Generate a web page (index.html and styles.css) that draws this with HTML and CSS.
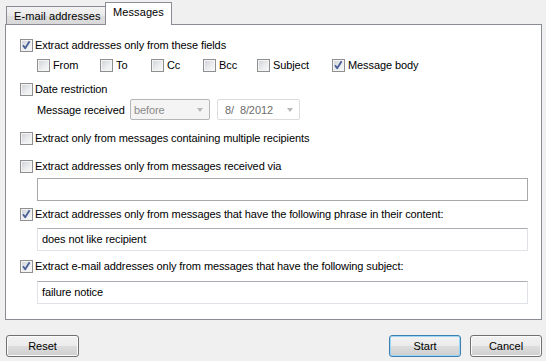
FILE: index.html
```html
<!DOCTYPE html>
<html>
<head>
<meta charset="utf-8">
<link rel="stylesheet" href="styles.css">
</head>
<body>
<div class="dialog">
  <div class="tabs">
    <div class="tab">E-mail addresses</div>
    <div class="tab active">Messages</div>
  </div>
  <div class="panel">
    <div class="row r1"><span class="cb checked"><svg width="11" height="11" viewBox="0 0 11 11"><path d="M2 5.2 L4.2 8.3 L8.6 1.3" fill="none" stroke="#4a5f97" stroke-width="1.8" stroke-linejoin="round"/></svg></span>Extract addresses only from these fields</div>
    <div class="fields">
      <div class="row"><span class="cb"></span>From</div>
      <div class="row"><span class="cb"></span>To</div>
      <div class="row"><span class="cb"></span>Cc</div>
      <div class="row"><span class="cb"></span>Bcc</div>
      <div class="row"><span class="cb"></span>Subject</div>
      <div class="row"><span class="cb checked"><svg width="11" height="11" viewBox="0 0 11 11"><path d="M2 5.2 L4.2 8.3 L8.6 1.3" fill="none" stroke="#4a5f97" stroke-width="1.8" stroke-linejoin="round"/></svg></span>Message body</div>
    </div>
    <div class="row r3"><span class="cb"></span>Date restriction</div>
    <div class="daterow">
      <span class="dlabel">Message received</span>
      <span class="select">before<span class="arrow"></span></span>
      <span class="date">8/&nbsp; 8/2012<span class="arrow"></span></span>
    </div>
    <div class="row r5"><span class="cb"></span>Extract only from messages containing multiple recipients</div>
    <div class="row r6"><span class="cb"></span>Extract addresses only from messages received via</div>
    <div class="input in1"></div>
    <div class="row r7"><span class="cb checked"><svg width="11" height="11" viewBox="0 0 11 11"><path d="M2 5.2 L4.2 8.3 L8.6 1.3" fill="none" stroke="#4a5f97" stroke-width="1.8" stroke-linejoin="round"/></svg></span>Extract addresses only from messages that have the following phrase in their content:</div>
    <div class="input in2">does not like recipient</div>
    <div class="row r8"><span class="cb checked"><svg width="11" height="11" viewBox="0 0 11 11"><path d="M2 5.2 L4.2 8.3 L8.6 1.3" fill="none" stroke="#4a5f97" stroke-width="1.8" stroke-linejoin="round"/></svg></span>Extract e-mail addresses only from messages that have the following subject:</div>
    <div class="input in3">failure notice</div>
  </div>
  <div class="buttons">
    <button class="btn reset">Reset</button>
    <span class="spacer"></span>
    <button class="btn default">Start</button>
    <button class="btn cancel">Cancel</button>
  </div>
</div>
</body>
</html>
```
FILE: styles.css
```css
html, body {
  margin: 0;
  padding: 0;
}
body {
  width: 546px;
  height: 361px;
  overflow: hidden;
  background: #f0f0f0;
  font-family: "Liberation Sans", Arial, sans-serif;
  font-size: 11px;
  letter-spacing: -0.1px;
  color: #000;
}
.dialog {
  padding: 2px 4px 0 5px;
}
.tabs {
  display: flex;
  align-items: flex-end;
  height: 23px;
  padding-left: 1px;
  position: relative;
  z-index: 1;
}
.tab {
  box-sizing: border-box;
  height: 18px;
  margin-bottom: 1px;
  width: 99px;
  padding-left: 7px;
  line-height: 18px;
  white-space: nowrap;
  border: 1px solid #898c95;
  border-right: none;
  border-bottom: none;
  background: linear-gradient(#f3f3f3, #e9e9e9 50%, #dedede 51%, #d9d9d9);
  font-size: 11px;
  letter-spacing: 0.1px;
}
.tab.active {
  height: 23px;
  margin-bottom: 0;
  width: 67px;
  padding-left: 7px;
  line-height: 19px;
  border-right: 1px solid #898c95;
  background: #fff;
  letter-spacing: 0.1px;
}
.panel {
  box-sizing: border-box;
  margin-top: -1px;
  height: 296px;
  border: 1px solid #898c95;
  background: #fff;
  padding: 0 13px 0 14px;
}
.row {
  display: flex;
  align-items: center;
  height: 13px;
  line-height: 13px;
  white-space: nowrap;
}
.cb {
  box-sizing: border-box;
  width: 13px;
  height: 13px;
  flex: none;
  margin-right: 2px;
  border: 1px solid #8f8f8f;
  background: linear-gradient(135deg, #cdd0d6, #eceef0 60%, #fafafa);
  box-shadow: inset 0 0 0 1px #f4f4f4;
  display: flex;
}
.cb svg {
  display: block;
}
.r1 { margin-top: 14px; }
.fields {
  margin-top: 7px;
  padding-left: 17px;
  display: grid;
  grid-template-columns: 63px 51px 52px 54px 75px auto;
}
.fields .cb { margin-right: 3px; }
.r3 { margin-top: 11px; }
.daterow {
  margin-top: 3px;
  padding-left: 17px;
  height: 21px;
  display: flex;
  align-items: center;
  white-space: nowrap;
}
.dlabel { width: 93px; }
.select, .date {
  box-sizing: border-box;
  height: 21px;
  position: relative;
  display: flex;
  align-items: center;
  border-radius: 2px;
}
.select {
  width: 80px;
  border: 1px solid #b4b6b8;
  background: #f4f4f4;
  color: #8a8a8a;
  padding-left: 3px;
}
.date {
  width: 83px;
  margin-left: 7px;
  border: 1px solid #dcdcdc;
  background: #fff;
  color: #6d6d6d;
  padding-left: 7px;
}
.arrow {
  position: absolute;
  right: 6px;
  top: 8px;
  width: 0;
  height: 0;
  border-left: 3.5px solid transparent;
  border-right: 3.5px solid transparent;
  border-top: 4px solid #b8b8b8;
}
.r5 { margin-top: 12px; }
.r6 { margin-top: 15px; }
.r7 { margin-top: 7px; }
.r8 { margin-top: 9px; }
.input {
  box-sizing: border-box;
  height: 23px;
  margin-left: 17px;
  border: 1px solid #dfe3e8;
  border-top-color: #abadb3;
  padding-left: 4px;
  line-height: 21px;
  background: #fff;
}
.in1 {
  margin-top: 5px;
  border-color: #a8a8a8;
}
.in2 { margin-top: 7px; }
.in3 { margin-top: 8px; }
.buttons {
  display: flex;
  margin-top: 15px;
  padding-left: 1px;
}
.spacer { flex: 1; }
.btn {
  box-sizing: border-box;
  height: 22px;
  width: 72px;
  padding: 0;
  border: 1px solid #707070;
  border-radius: 3px;
  background: linear-gradient(#f2f2f2, #ebebeb 50%, #dddddd 51%, #cfcfcf);
  box-shadow: inset 0 0 0 1px #fbfbfb;
  font-family: "Liberation Sans", Arial, sans-serif;
  font-size: 11px;
  color: #000;
}
.reset { width: 73px; }
.default {
  border-color: #3c7fb1;
  box-shadow: inset 0 0 0 1px #9fd6f4;
}
.cancel { margin-left: 9px; }
```
